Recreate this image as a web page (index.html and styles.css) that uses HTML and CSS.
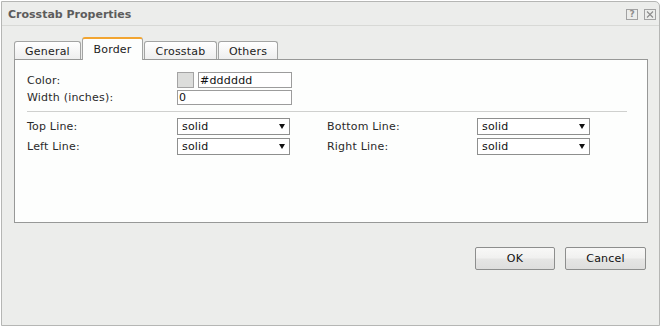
FILE: index.html
```html
<!DOCTYPE html>
<html>
<head>
<meta charset="utf-8">
<link rel="stylesheet" href="styles.css">
</head>
<body>
<div class="dialog">
  <div class="titlebar">
    <span class="title">Crosstab Properties</span>
    <div class="tools">
      <span class="tool help">?</span>
      <span class="tool close"><svg width="8" height="7" viewBox="0 0 8 7"><path d="M1 0.5L7 6.5M7 0.5L1 6.5" stroke="#8c8c8c" stroke-width="1.1" fill="none"/></svg></span>
    </div>
  </div>
  <div class="body">
    <div class="tabs">
      <div class="tab t-general">General</div>
      <div class="tab active t-border">Border</div>
      <div class="tab t-crosstab">Crosstab</div>
      <div class="tab t-others">Others</div>
    </div>
    <div class="panel">
      <div class="row r-color">
        <span class="label">Color:</span>
        <span class="swatch"></span>
        <span class="input color-input">#dddddd</span>
      </div>
      <div class="row r-width">
        <span class="label">Width (inches):</span>
        <span class="input width-input">0</span>
      </div>
      <div class="sep"></div>
      <div class="row r-lines r-first">
        <div class="field">
          <span class="label">Top Line:</span>
          <div class="select"><span>solid</span><svg width="6" height="5" viewBox="0 0 6 5"><polygon points="0,0 6,0 3,5" fill="#111"/></svg></div>
        </div>
        <div class="field">
          <span class="label">Bottom Line:</span>
          <div class="select"><span>solid</span><svg width="6" height="5" viewBox="0 0 6 5"><polygon points="0,0 6,0 3,5" fill="#111"/></svg></div>
        </div>
      </div>
      <div class="row r-lines r-second">
        <div class="field">
          <span class="label">Left Line:</span>
          <div class="select"><span>solid</span><svg width="6" height="5" viewBox="0 0 6 5"><polygon points="0,0 6,0 3,5" fill="#111"/></svg></div>
        </div>
        <div class="field">
          <span class="label">Right Line:</span>
          <div class="select"><span>solid</span><svg width="6" height="5" viewBox="0 0 6 5"><polygon points="0,0 6,0 3,5" fill="#111"/></svg></div>
        </div>
      </div>
    </div>
    <div class="buttons">
      <div class="btn btn-ok">OK</div>
      <div class="btn btn-cancel">Cancel</div>
    </div>
  </div>
</div>
</body>
</html>
```

FILE: styles.css
```css
html, body {
  margin: 0;
  padding: 0;
  background: #ffffff;
}

body {
  font-family: "DejaVu Sans", Verdana, sans-serif;
  font-size: 11px;
  letter-spacing: 0.2px;
  color: #2a2a2a;
}

.dialog {
  margin: 1px 0 0 1px;
  width: 659px;
  height: 325px;
  box-sizing: border-box;
  border: 1px solid #b5b6b4;
  border-top-right-radius: 5px;
  background: #ecedeb;
  display: flex;
  flex-direction: column;
}

.titlebar {
  height: 24px;
  box-sizing: border-box;
  border-bottom: 1px solid #d8d9d6;
  display: flex;
  align-items: center;
  padding: 1px 3px 0 6px;
}

.title {
  flex: 1;
  font-weight: bold;
  font-size: 11px;
  letter-spacing: 0;
  color: #5c5c5c;
}

.tools {
  display: flex;
  gap: 6px;
}

.tool {
  width: 12px;
  height: 11px;
  box-sizing: border-box;
  border: 1px solid #a2a2a2;
  display: flex;
  align-items: center;
  justify-content: center;
  font-size: 9px;
  font-weight: bold;
  letter-spacing: 0;
  color: #8c8c8c;
  line-height: 1;
}

.tabs {
  display: flex;
  align-items: flex-end;
  margin: 11px 0 0 12px;
  gap: 1px;
}

.tab {
  height: 18px;
  box-sizing: border-box;
  border: 1px solid #a3a4a3;
  border-bottom: none;
  border-radius: 3px 3px 0 0;
  background: linear-gradient(#ffffff, #eeeeee);
  display: flex;
  align-items: center;
  justify-content: center;
  color: #222;
  padding-top: 1px;
}

.tab.active {
  height: 23px;
  margin-bottom: -1px;
  border-top: 2px solid #f2a531;
  background: #fdfefd;
  z-index: 1;
  padding-top: 0;
  padding-bottom: 1px;
}

.t-general { width: 67px; }
.t-border { width: 61px; }
.t-crosstab { width: 73px; }
.t-others { width: 60px; }

.panel {
  margin: 0 11px 0 12px;
  height: 164px;
  box-sizing: border-box;
  border: 1px solid #979897;
  background: #fdfefd;
  padding: 12px 20px 0 12px;
}

.row {
  display: flex;
  align-items: center;
}

.label {
  width: 150px;
  flex: none;
}

.r-color {
  height: 16px;
}

.r-width {
  height: 15px;
  margin-top: 2px;
}

.swatch {
  width: 17px;
  height: 16px;
  box-sizing: border-box;
  border: 1px solid #a3a3a3;
  background: #dcdddb;
  margin-right: 4px;
}

.input {
  box-sizing: border-box;
  border: 1px solid #9c9c9c;
  background: #ffffff;
  padding-left: 1px;
  display: flex;
  align-items: center;
  color: #111;
}

.color-input {
  width: 94px;
  height: 16px;
}

.width-input {
  width: 115px;
  height: 15px;
}

.sep {
  margin-top: 6px;
  height: 1px;
  background: #cfd0ce;
}

.r-lines {
  gap: 37px;
  height: 17px;
}

.r-first {
  margin-top: 6px;
}

.r-second {
  margin-top: 3px;
}

.field {
  display: flex;
  align-items: center;
}

.select {
  width: 113px;
  height: 17px;
  box-sizing: border-box;
  border: 1px solid #8e8f8e;
  background: #ffffff;
  display: flex;
  align-items: center;
  justify-content: space-between;
  padding: 0 4px;
  color: #111;
}

.buttons {
  display: flex;
  justify-content: flex-end;
  gap: 10px;
  margin-top: 24px;
  padding-right: 13px;
}

.btn {
  height: 23px;
  box-sizing: border-box;
  border: 1px solid #8d8e8d;
  border-radius: 2px;
  background: linear-gradient(#f8f8f7, #f1f1f0 45%, #e5e5e4 55%, #dededd);
  display: flex;
  align-items: center;
  justify-content: center;
  color: #111;
}

.btn-ok { width: 80px; }
.btn-cancel { width: 81px; }
```
